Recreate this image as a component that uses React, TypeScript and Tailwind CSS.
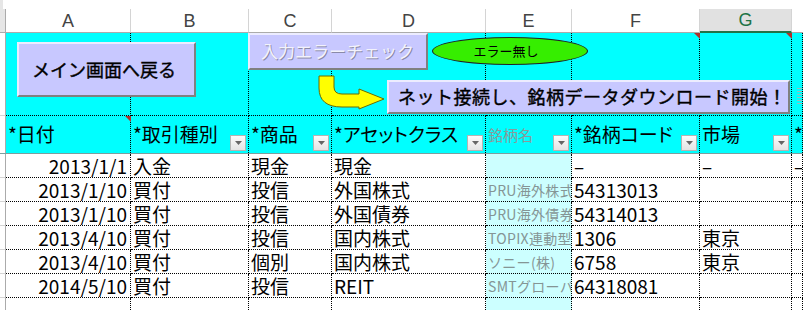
import React from 'react';

const jp = "font-['Noto_Sans_CJK_JP',sans-serif]";
const colTemplate = 'grid grid-cols-[6px_125px_118px_83px_154px_86px_128px_92px_1fr]';

const letters = ['A', 'B', 'C', 'D', 'E', 'F', 'G'];

type Row = [string, string, string, string, string, string, string, string];

const rows: Row[] = [
  ['2013/1/1', '入金', '現金', '現金', '', '–', '–', '–'],
  ['2013/1/10', '買付', '投信', '外国株式', 'PRU海外株式', '54313013', '', ''],
  ['2013/1/10', '買付', '投信', '外国債券', 'PRU海外債券', '54314013', '', ''],
  ['2013/4/10', '買付', '投信', '国内株式', 'TOPIX連動型', '1306', '東京', ''],
  ['2013/4/10', '買付', '個別', '国内株式', 'ソニー(株)', '6758', '東京', ''],
  ['2014/5/10', '買付', '投信', 'REIT', 'SMTグローバル', '64318081', '', ''],
  ['', '', '', '', '', '', '', ''],
];

function Dropdown() {
  return (
    <div className="absolute right-[2px] bottom-[2px] w-4 h-4 bg-gradient-to-b from-[#fbfbfb] to-[#e4e4e4] border border-[#b4b4b4] flex items-center justify-center">
      <svg width="7" height="4" viewBox="0 0 7 4">
        <polygon points="0,0 7,0 3.5,4" fill="#666" />
      </svg>
    </div>
  );
}

function CommentMark({ className }: { className: string }) {
  return (
    <svg className={`absolute ${className}`} width="6" height="6" viewBox="0 0 6 6">
      <polygon points="0,0 6,0 6,6" fill="#b0302a" />
    </svg>
  );
}

function HeaderCell({ text, dd = true, dim = false }: { text: string; dd?: boolean; dim?: boolean }) {
  return (
    <div className="relative flex items-center pl-[2px] border-r border-dotted border-black overflow-hidden whitespace-nowrap">
      <span
        className={`${jp} [font-feature-settings:'palt'] leading-[1.2] ${dim ? 'text-[15px] text-[#8a9a9a]' : 'text-[19px] text-black'}`}
      >
        {text}
      </span>
      {dd && <Dropdown />}
    </div>
  );
}

export default function App() {
  return (
    <div className={`relative w-[803px] h-[310px] overflow-hidden bg-white ${jp}`}>
      {/* strip above the column letters */}
      <div className="h-[9px] flex">
        <div className="w-[3px] bg-[#e6e6e6]" />
      </div>

      {/* column letters */}
      <div className={`${colTemplate} h-[24px]`}>
        <div className="bg-[#e6e6e6] border-r border-[#ababab] border-b border-b-[#ababab]" />
        {letters.map((l) => (
          <div
            key={l}
            className={`flex items-center justify-center font-['Liberation_Sans',sans-serif] text-[18px] leading-none border-r border-[#d4d4d4] ${
              l === 'G'
                ? 'bg-[#e1e1e1] text-[#217346] border-b-2 border-b-[#217346]'
                : 'text-[#444] border-b border-b-[#ababab]'
            }`}
          >
            {l}
          </div>
        ))}
        <div className="border-b border-b-[#ababab]" />
      </div>

      {/* button rows */}
      <div className={`${colTemplate} h-[83px]`}>
        <div className="bg-white border-r border-[#ababab] border-b border-b-[#d4d4d4]" />
        {Array.from({ length: 8 }).map((_, i) => (
          <div key={i} className="bg-[#00ffff] border-r border-dotted border-black border-b border-b-black" />
        ))}
      </div>

      {/* table header */}
      <div className={`${colTemplate} h-[38px] bg-[#00ffff] border-b border-[#7c9e9e]`}>
        <div className="bg-white border-r border-[#ababab]" />
        <HeaderCell text="*日付" dd={false} />
        <HeaderCell text="*取引種別" />
        <HeaderCell text="*商品" />
        <HeaderCell text="*アセットクラス" />
        <HeaderCell text="銘柄名" dim />
        <HeaderCell text="*銘柄コード" />
        <HeaderCell text="市場" />
        <HeaderCell text="*" dd={false} />
      </div>

      {/* data */}
      {rows.map((r, ri) => (
        <div key={ri} className={`${colTemplate} h-[24px]`}>
          <div className="bg-white border-r border-[#ababab] border-b border-b-[#d4d4d4]" />
          {r.map((v, ci) => (
            <div
              key={ci}
              className={`flex items-center overflow-hidden whitespace-nowrap border-r border-dotted border-black border-b border-b-black ${
                ci === 0 ? 'justify-end pr-[3px]' : 'pl-[2px]'
              } ${ci === 4 ? 'bg-[#ccffff]' : 'bg-white'}`}
            >
              <span
                className={`leading-[1.15] ${
                  ci === 4 ? 'text-[14px] tracking-[0.3px] text-[#859595] pt-[2px]' : 'text-[19px] text-black'
                }`}
              >
                {v}
              </span>
            </div>
          ))}
        </div>
      ))}

      {/* floating shapes */}
      <button className="absolute left-[17px] top-[42px] w-[179px] h-[55px] bg-[#c8c8ff] border-2 border-t-[#ececff] border-l-[#ececff] border-b-[#808080] border-r-[#808080] flex items-center pl-[13px] text-[18px] font-normal [-webkit-text-stroke:0.4px_#000] leading-[1.2] text-black">
        メイン画面へ戻る
      </button>

      <button className="absolute left-[248px] top-[33px] w-[180px] h-[37px] bg-[#c8c8ff] border-2 border-t-[#ececff] border-l-[#ececff] border-b-[#808080] border-r-[#808080] flex items-center pl-[11px] text-[17px] font-normal leading-[1.2] text-[#f2f2fc] [text-shadow:1px_1px_0_#8a8aa8]">
        入力エラーチェック
      </button>

      <div className="absolute left-[432px] top-[37px] w-[156px] h-[28px] rounded-[50%] bg-[#36ee00] border border-[#222] flex items-center justify-center pr-[8px] text-[13px] leading-[1.2] text-black">
        エラー無し
      </div>

      <svg className="absolute left-0 top-0" width="400" height="120" viewBox="0 0 400 120">
        <path
          d="M319,76 L334,76 L334,87 Q334,94 342,94 L359,94 L359,89 L384,99 L359,109 L359,107 L342,107 Q319,107 319,88 Z"
          fill="#ffff00"
          stroke="#6b6b00"
          strokeWidth="1"
        />
      </svg>

      <button className="absolute left-[387px] top-[80px] w-[403px] h-[34px] bg-[#c8c8ff] border-2 border-t-[#ececff] border-l-[#ececff] border-b-[#808080] border-r-[#808080] flex items-center pl-[9px] text-[18px] tracking-[0.5px] font-normal [-webkit-text-stroke:0.4px_#000] leading-[1.2] text-black">
        ネット接続し、銘柄データダウンロード開始！
      </button>

      <div className="absolute left-[797px] top-[88px] w-[5px] h-[17px] bg-[repeating-linear-gradient(to_bottom,#9fb8b8_0_1px,transparent_1px_3px)]" />

      <CommentMark className="left-[125px] top-[116px]" />
      <CommentMark className="left-[694px] top-[33px]" />
      <CommentMark className="left-[786px] top-[33px]" />
    </div>
  );
}
